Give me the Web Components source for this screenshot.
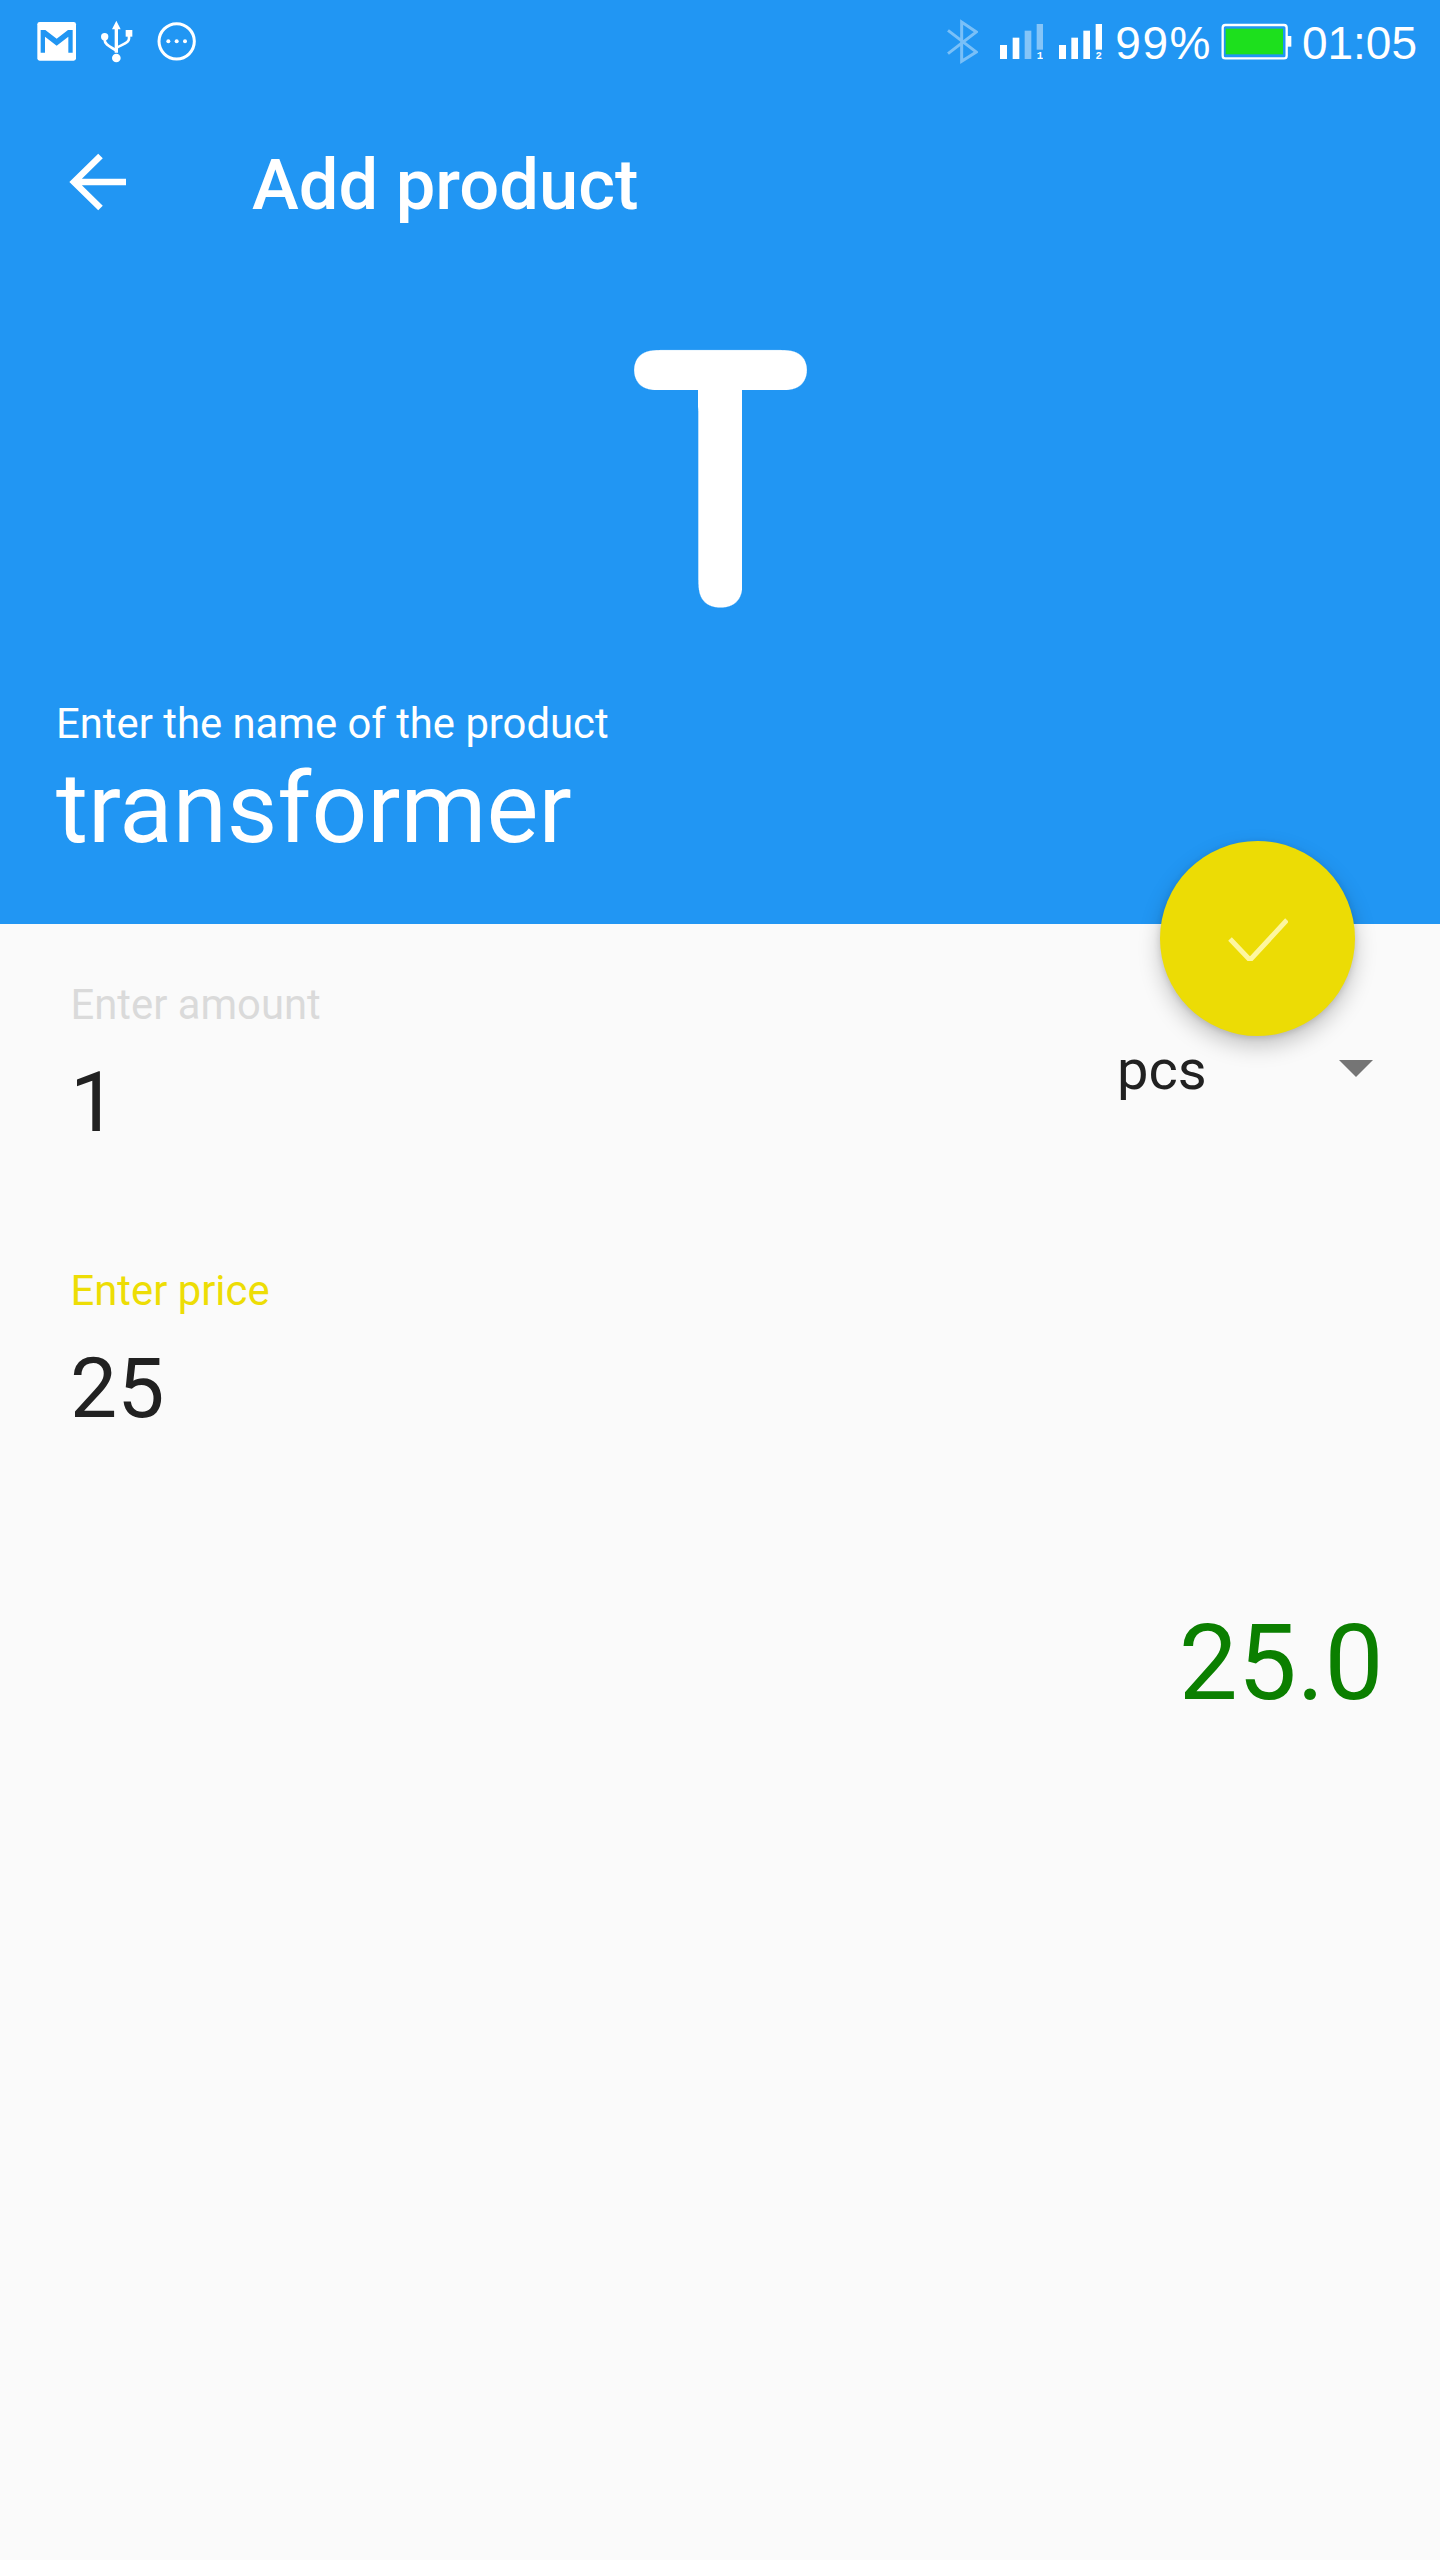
<!DOCTYPE html>
<html lang="en"><head><meta charset="utf-8"><title>Add product</title>
<style>
html,body{margin:0;background:#fafafa}
body{font-family:Roboto,"Liberation Sans",sans-serif}
</style></head><body>
<add-product-screen></add-product-screen>
<script>
function el(name, css, html){
  customElements.define(name, class extends HTMLElement{
    constructor(){super();const s=this.attachShadow({mode:'open'});s.innerHTML='<style>'+css+'</style>'+html;}
  });
}
el('app-status-bar',`
:host{display:flex;justify-content:space-between;height:84px;box-sizing:border-box;padding:17px 23px 0 37px;color:#fff;font:46px/52px "Liberation Sans",Arial,sans-serif}
.g{display:flex;height:52px}svg{display:block;flex:none}
`,`
<div class="g">
<svg width="40" height="52" viewBox="111 51 120 156"><rect x="112" y="66" width="116" height="116" rx="7" fill="#fff"/><path fill="#2196f3" d="M122 90h14l34 26 34-26h14v68h-13v-48l-35 27-35-27v48h-13z"/></svg>
<svg style="margin-left:23px" width="34" height="52" viewBox="300 51 102 156" fill="#fff"><path d="M349 62l13 26h-8v70h-10V88h-8z"/><circle cx="349" cy="174" r="13"/><circle cx="314" cy="110" r="11"/><rect x="377" y="90" width="20" height="20"/><path fill="none" stroke="#fff" stroke-width="8" d="M314 112v8c0 16 22 22 35 32M387 108v8c0 14-24 18-38 28"/></svg>
<svg style="margin-left:23px" width="40" height="52" viewBox="471 51 120 156" fill="#fff"><circle cx="530" cy="124" r="53" fill="none" stroke="#fff" stroke-width="9"/><circle cx="505" cy="124" r="6"/><circle cx="530" cy="124" r="6"/><circle cx="555" cy="124" r="6"/></svg>
</div>
<div class="g">
<svg width="32" height="52" viewBox="81 51 96 156"><path fill="none" stroke="#fff" stroke-opacity=".4" stroke-width="9" d="M87 91l85 65-44 28V66l44 30-85 65"/></svg>
<svg style="margin-left:22px" width="43" height="52" viewBox="240 51 129 156" fill="#fff"><rect x="240" y="135" width="21" height="42"/><rect x="278" y="113" width="20" height="64"/><rect x="314" y="92" width="20" height="85" opacity=".45"/><rect x="350" y="72" width="19" height="77" opacity=".45"/><text x="359.5" y="177" text-anchor="middle" font-family="Liberation Mono" font-weight="700" font-size="32">1</text></svg>
<svg style="margin-left:16px" width="43" height="52" viewBox="418 51 129 156" fill="#fff"><rect x="418" y="135" width="21" height="42"/><rect x="455" y="113" width="20" height="64"/><rect x="491" y="92" width="20" height="85"/><rect x="528" y="72" width="19" height="77"/><text x="537.5" y="177" text-anchor="middle" font-family="Liberation Mono" font-weight="700" font-size="32">2</text></svg>
<span style="margin-left:13px;letter-spacing:1.5px">99%</span>
<svg style="margin-left:9px" width="71" height="52" viewBox="903 51 213 156"><rect x="908" y="75" width="192" height="100" rx="8" fill="none" stroke="#fff" stroke-width="7"/><rect x="917" y="86" width="172" height="77" fill="#1de01d"/><rect x="1100" y="108" width="14" height="32" fill="#fff"/></svg>
<span style="margin-left:10px">01:05</span>
</div>`);

el('app-toolbar',`
:host{display:flex;align-items:center;height:196px;padding-left:62px;color:#fff}
svg{display:block;flex:none}
span{margin-left:120px;padding-top:6px;font:500 70.5px/80px Roboto,sans-serif;}
`,`<svg width="70" height="60" viewBox="62 152 70 60" fill="none" stroke="#fff" stroke-width="6.500"><path d="M126 182H74M100.500 156L74 182l26.500 26"/></svg><span><slot></slot></span>`);

el('letter-avatar',`
:host{display:flex;justify-content:center;margin-top:60px}
svg{display:block;overflow:visible}
`,`<svg width="300" height="280" viewBox="-150 0 300 280"><defs><filter id="r" filterUnits="userSpaceOnUse" x="-150" y="-20" width="300" height="320" color-interpolation-filters="sRGB"><feGaussianBlur stdDeviation="9"/><feComponentTransfer><feFuncA type="linear" slope="20" intercept="-9.500"/></feComponentTransfer></filter><clipPath id="c"><path d="M-95 5H95V50H22V275H-22V50H-95Z"/></clipPath></defs><g clip-path="url(#c)"><g filter="url(#r)"><g transform="translate(.5 0) scale(.79 1)"><text id="t" x="-8" y="252" text-anchor="middle" fill="#fff" stroke="#fff" stroke-width="32" stroke-linejoin="round" font-family="Roboto" font-weight="100" font-size="318">T</text><use href="#t" x="16"/></g></g></g></svg>`);

el('name-field',`
:host{display:block;margin-top:79px;padding:0 0 59px 56px;color:#fff}
.l{font:400 41.8px/50px Roboto,sans-serif}
.v{font:400 98px/112px Roboto,sans-serif;margin-top:4px}
`,`<div class="l"><slot name="label"></slot></div><div class="v"><slot></slot></div>`);

el('product-header',`:host{display:block;background:#2196f3}`,`<slot></slot>`);

el('form-field',`
:host{display:block;padding-left:70.5px}
.l{font:400 41.8px/50px Roboto,sans-serif;color:var(--label,#dadada)}
.v{font:400 84px/98px Roboto,sans-serif;color:#212121;margin-top:24px;margin-left:-.5px}
`,`<div class="l"><slot name="label"></slot></div><div class="v"><slot></slot></div>`);

el('unit-select',`
:host{display:flex;justify-content:space-between;width:256px;margin:60px 67px 0 auto;font:400 56px/60px Roboto,sans-serif;color:#212121}
svg{display:block;margin-top:20px}
`,`<span><slot></slot></span><svg width="34" height="17" viewBox="0 0 34 17"><path d="M0 0h34L17 17z" fill="#757575"/></svg>`);

el('amount-row',`:host{display:flex;justify-content:space-between;align-items:flex-start;padding-top:56px}`,`<slot></slot>`);

el('total-price',`
:host{display:block;text-align:right;padding-right:56.5px;margin-top:164px;font:400 105px/124px Roboto,sans-serif;color:#0b7f00}
`,`<slot></slot>`);

el('confirm-fab',`
:host{position:absolute;left:1160px;top:841px;width:195px;height:195px;border-radius:50%;background:#ecdc05;box-shadow:0 10px 22px rgba(0,0,0,.22),0 2px 6px rgba(0,0,0,.12);display:flex;align-items:center;justify-content:center}
svg{display:block}
`,`<svg width="60" height="44" viewBox="0 0 60 44" fill="none" stroke="#fdf6a0" stroke-width="5"><path d="M2 22l20 21L59 3"/></svg>`);

el('add-product-screen',`:host{display:block;position:relative;height:2560px;overflow:hidden;background:#fafafa}`,`<slot></slot>`);

document.querySelector('add-product-screen').innerHTML=`
<product-header>
  <app-status-bar></app-status-bar>
  <app-toolbar>Add product</app-toolbar>
  <letter-avatar></letter-avatar>
  <name-field><span slot="label">Enter the name of the product</span>transformer</name-field>
</product-header>
<amount-row>
  <form-field><span slot="label">Enter amount</span>1</form-field>
  <unit-select>pcs</unit-select>
</amount-row>
<form-field style="margin-top:114px;--label:#eddd05"><span slot="label">Enter price</span>25</form-field>
<total-price>25.0</total-price>
<confirm-fab></confirm-fab>`;
</script>
</body></html>
